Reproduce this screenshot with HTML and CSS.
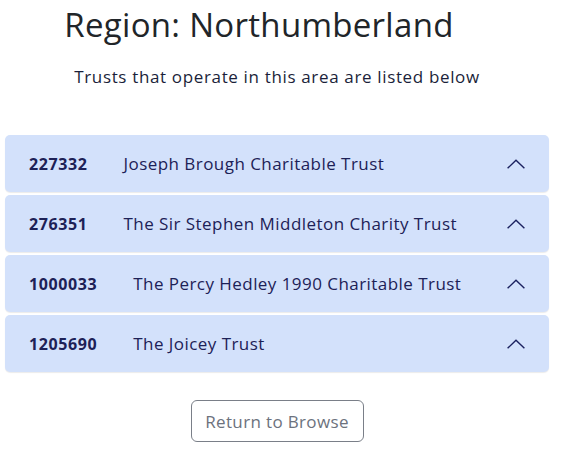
FILE: index.html
```html
<!DOCTYPE html>
<html lang="en">
<head>
<meta charset="utf-8">
<title>Region: Northumberland</title>
<link rel="stylesheet" href="styles.css">
</head>
<body>
<main class="page">
  <h1 class="title">Region: Northumberland</h1>
  <p class="lead">Trusts that operate in this area are listed below</p>
  <div class="accordion">
    <div class="item">
      <span class="num">227332</span>
      <span class="name">Joseph Brough Charitable Trust</span>
      <svg class="chev" width="18" height="10" viewBox="0 0 18 10"><path d="M0.6 9.3 L9 1.2 L17.4 9.3" fill="none" stroke="#1c2260" stroke-width="1.4"/></svg>
    </div>
    <div class="item">
      <span class="num">276351</span>
      <span class="name">The Sir Stephen Middleton Charity Trust</span>
      <svg class="chev" width="18" height="10" viewBox="0 0 18 10"><path d="M0.6 9.3 L9 1.2 L17.4 9.3" fill="none" stroke="#1c2260" stroke-width="1.4"/></svg>
    </div>
    <div class="item">
      <span class="num">1000033</span>
      <span class="name">The Percy Hedley 1990 Charitable Trust</span>
      <svg class="chev" width="18" height="10" viewBox="0 0 18 10"><path d="M0.6 9.3 L9 1.2 L17.4 9.3" fill="none" stroke="#1c2260" stroke-width="1.4"/></svg>
    </div>
    <div class="item">
      <span class="num">1205690</span>
      <span class="name">The Joicey Trust</span>
      <svg class="chev" width="18" height="10" viewBox="0 0 18 10"><path d="M0.6 9.3 L9 1.2 L17.4 9.3" fill="none" stroke="#1c2260" stroke-width="1.4"/></svg>
    </div>
  </div>
  <div class="actions">
    <button class="btn">Return to Browse</button>
  </div>
</main>
</body>
</html>
```
FILE: styles.css
```css
html, body {
  margin: 0;
  padding: 0;
  background: #ffffff;
}
body {
  font-family: "Open Sans", "Noto Sans", sans-serif;
  color: #212529;
}
.page {
  padding: 4px 12px 0 5px;
}
.title {
  margin: 0;
  padding-right: 36px;
  text-align: center;
  font-size: 33px;
  font-weight: 400;
  line-height: 42px;
  letter-spacing: 0.3px;
  color: #212529;
}
.lead {
  margin: 20px 0 0;
  text-align: center;
  font-size: 17px;
  line-height: 22px;
  letter-spacing: 0.65px;
  color: #1b1f3a;
}
.accordion {
  margin-top: 47px;
  display: flex;
  flex-direction: column;
  gap: 3px;
}
.item {
  height: 57px;
  display: flex;
  align-items: center;
  padding: 0 24px 0 24px;
  background: #d3e1fb;
  border-radius: 5px;
  box-shadow: 0 1px 1px rgba(0, 0, 0, 0.08);
  color: #1d2157;
  font-size: 17px;
}
.num {
  font-weight: 700;
  font-size: 16px;
  letter-spacing: 0.6px;
  margin-left: 0;
  margin-right: 36px;
}
.name {
  flex: 1;
  letter-spacing: 0.45px;
}
.chev {
  display: block;
}
.actions {
  display: flex;
  justify-content: center;
  margin-top: 28px;
}
.btn {
  font-family: inherit;
  font-size: 17px;
  letter-spacing: 0.35px;
  color: #6c727d;
  background: #ffffff;
  border: 1px solid #7a7f88;
  border-radius: 6px;
  width: 173px;
  height: 42px;
  padding: 0;
}
```
